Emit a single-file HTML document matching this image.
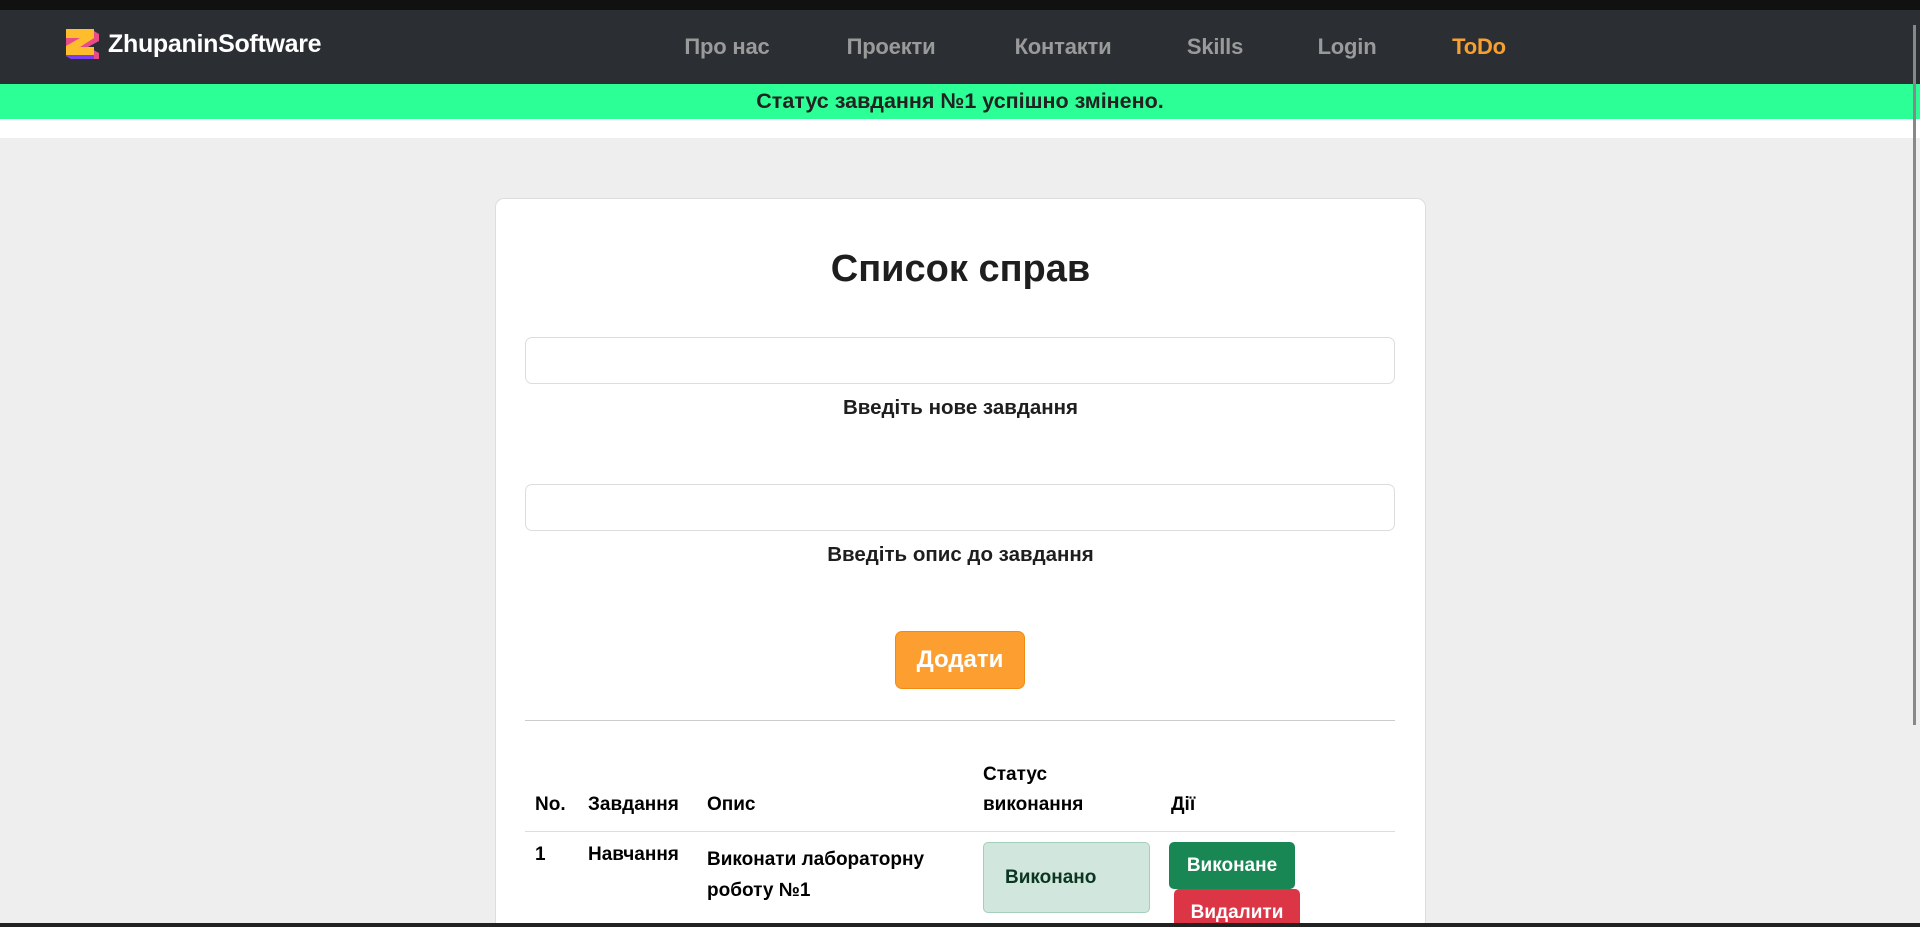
<!DOCTYPE html>
<html style="width:1920px;height:927px;overflow:hidden"><head><meta charset="utf-8"><style>
*{box-sizing:border-box;margin:0;padding:0}
body{width:1920px;height:927px;overflow:hidden;background:#eeeeee;font-family:"Liberation Sans",sans-serif;font-weight:bold;position:relative;color:#1e1e1e}
.abs{position:absolute}
.top{left:0;top:0;width:1920px;height:10px;background:#111}
.nav{left:0;top:10px;width:1920px;height:74px;background:#2b2f33}
.nav a{position:absolute;top:24px;font-size:22px;color:#9a9a9a;text-decoration:none;transform:translateX(-50%);letter-spacing:-0.2px}
.green{left:0;top:84px;width:1920px;height:35px;background:#2bff95;text-align:center;font-size:21.5px;line-height:35px;color:#222}
.white{left:0;top:119px;width:1920px;height:19px;background:#fff}
.card{left:495px;top:198px;width:931px;height:729px;background:#fff;border:1px solid #ddd;border-bottom:none;border-radius:9px 9px 0 0}
.c{text-align:center;left:495px;width:931px}
.inp{left:525px;width:870px;height:47px;border:1px solid #ddd;border-radius:7px;background:#fff}
.th{font-size:19px;color:#000}
.td{font-size:19px;color:#000}
</style></head><body>
<div class="abs top"></div>
<div class="abs nav">
<svg class="abs" style="left:66px;top:19px" width="36" height="32" viewBox="0 0 36 32">
<polygon points="0,2 28,2 33,5 33,12 22,18 33,24 33,30 5,30 0,27" fill="#e84a8a"/>
<polygon points="0,18 28,18 28,30 5,30 0,27" fill="#7a3ff0"/>
<polygon points="0,0 28,0 28,9 14,18 28,18 28,26 0,26 0,17 14,9 0,9" fill="#ffbd2e"/>
</svg>
<div class="abs" style="left:108px;top:20px;font-size:25px;color:#fff;letter-spacing:-0.3px">ZhupaninSoftware</div>
<a style="left:727px">Про нас</a>
<a style="left:891px">Проекти</a>
<a style="left:1063px">Контакти</a>
<a style="left:1215px">Skills</a>
<a style="left:1347px">Login</a>
<a style="left:1479px;color:#f7a030">ToDo</a>
</div>
<div class="abs green">Статус завдання №1 успішно змінено.</div>
<div class="abs white"></div>
<div class="abs" style="left:1913px;top:25px;width:3px;height:700px;background:#888"></div>
<div class="abs card"></div>
<div class="abs c" style="top:248px;font-size:38px;color:#1e1e1e">Список справ</div>
<div class="abs inp" style="top:337px"></div>
<div class="abs c" style="top:396px;font-size:20.5px">Введіть нове завдання</div>
<div class="abs inp" style="top:484px"></div>
<div class="abs c" style="top:543px;font-size:20.5px">Введіть опис до завдання</div>
<div class="abs" style="left:895px;top:631px;width:130px;height:58px;background:#fd9f30;border:1px solid #f08a10;border-radius:7px;color:#fff;font-size:24px;text-align:center;line-height:56px">Додати</div>
<div class="abs" style="left:525px;top:720px;width:870px;height:1px;background:#ccc"></div>
<div class="abs th" style="left:983px;top:764px">Статус</div>
<div class="abs th" style="left:535px;top:794px">No.</div>
<div class="abs th" style="left:588px;top:794px">Завдання</div>
<div class="abs th" style="left:707px;top:794px">Опис</div>
<div class="abs th" style="left:983px;top:794px">виконання</div>
<div class="abs th" style="left:1171px;top:794px">Дії</div>
<div class="abs" style="left:525px;top:831px;width:870px;height:1px;background:#ddd"></div>
<div class="abs td" style="left:535px;top:844px">1</div>
<div class="abs td" style="left:588px;top:844px">Навчання</div>
<div class="abs td" style="left:707px;top:844px;line-height:31px">Виконати лабораторну<br>роботу №1</div>
<div class="abs" style="left:983px;top:842px;width:167px;height:71px;background:#d1e7dd;border:1px solid #a3cfbb;border-radius:5px;color:#0a3622;font-size:19px;line-height:69px;padding-left:21px">Виконано</div>
<div class="abs" style="left:1169px;top:842px;width:126px;height:47px;background:#198754;border-radius:5px;color:#fff;font-size:19px;line-height:47px;text-align:center">Виконане</div>
<div class="abs" style="left:1174px;top:889px;width:126px;height:38px;overflow:hidden;background:#dc3545;border-radius:5px 5px 0 0;color:#fff;font-size:19px;line-height:47px;text-align:center">Видалити</div>
<div class="abs" style="left:0;top:923px;width:1920px;height:4px;background:#222"></div>
</body></html>
